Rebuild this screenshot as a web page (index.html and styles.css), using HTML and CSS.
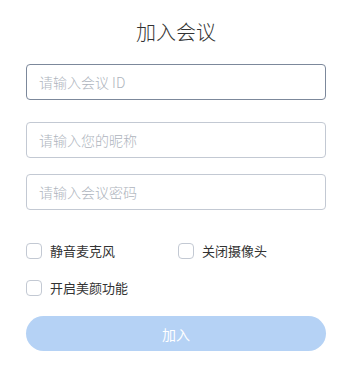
FILE: index.html
```html
<!DOCTYPE html>
<html lang="zh-CN">
<head>
<meta charset="utf-8">
<title>加入会议</title>
<link rel="stylesheet" href="styles.css">
</head>
<body>
<div class="panel">
  <h1 class="title">加入会议</h1>
  <form class="form">
    <input class="field field-focus field-first" type="text" placeholder="请输入会议 ID">
    <input class="field field-second" type="text" placeholder="请输入您的昵称">
    <input class="field" type="password" placeholder="请输入会议密码">
    <div class="options">
      <label class="option"><span class="box"></span><span class="label">静音麦克风</span></label>
      <label class="option"><span class="box"></span><span class="label">关闭摄像头</span></label>
      <label class="option"><span class="box"></span><span class="label">开启美颜功能</span></label>
    </div>
    <button class="join" type="button">加入</button>
  </form>
</div>
</body>
</html>
```
FILE: styles.css
```css
html, body {
  margin: 0;
  padding: 0;
  background: #ffffff;
}
body {
  font-family: "Noto Sans CJK SC", "Noto Sans", sans-serif;
  color: #333333;
}
.panel {
  padding: 18px 25px 0 26px;
}
.title {
  margin: 0;
  font-size: 20px;
  line-height: 28px;
  font-weight: 300;
  text-align: center;
  color: #333333;
}
.form {
  display: flex;
  flex-direction: column;
  margin-top: 18px;
}
.field {
  box-sizing: border-box;
  width: 300px;
  height: 36px;
  margin: 0 0 16px 0;
  padding: 0 12px;
  border: 1px solid #c3c9d3;
  border-radius: 4px;
  font-family: "Noto Sans CJK SC", "Noto Sans", sans-serif;
  font-size: 14px;
  font-weight: 300;
  color: #333333;
  outline: none;
  background: #fff;
}
.field::placeholder {
  color: #aeb4bd;
}
.field-focus {
  border-color: #7c889b;
}
.field-first {
  margin-bottom: 22px;
}
.field-second {
  margin-bottom: 16px;
}
.options {
  display: grid;
  grid-template-columns: 152px 148px;
  row-gap: 21px;
  margin-top: 17px;
}
.option {
  display: flex;
  align-items: center;
  gap: 8px;
  height: 16px;
  font-size: 13px;
  color: #333333;
}
.box {
  box-sizing: border-box;
  width: 16px;
  height: 16px;
  border: 1px solid #c3c9d3;
  border-radius: 4px;
  background: #fff;
  flex: none;
}
.label {
  line-height: 16px;
}
.join {
  box-sizing: border-box;
  width: 300px;
  height: 35px;
  margin-top: 20px;
  border: none;
  border-radius: 18px;
  background: #b5d2f5;
  color: #ffffff;
  font-family: "Noto Sans CJK SC", "Noto Sans", sans-serif;
  font-size: 14px;
  cursor: default;
}
```
